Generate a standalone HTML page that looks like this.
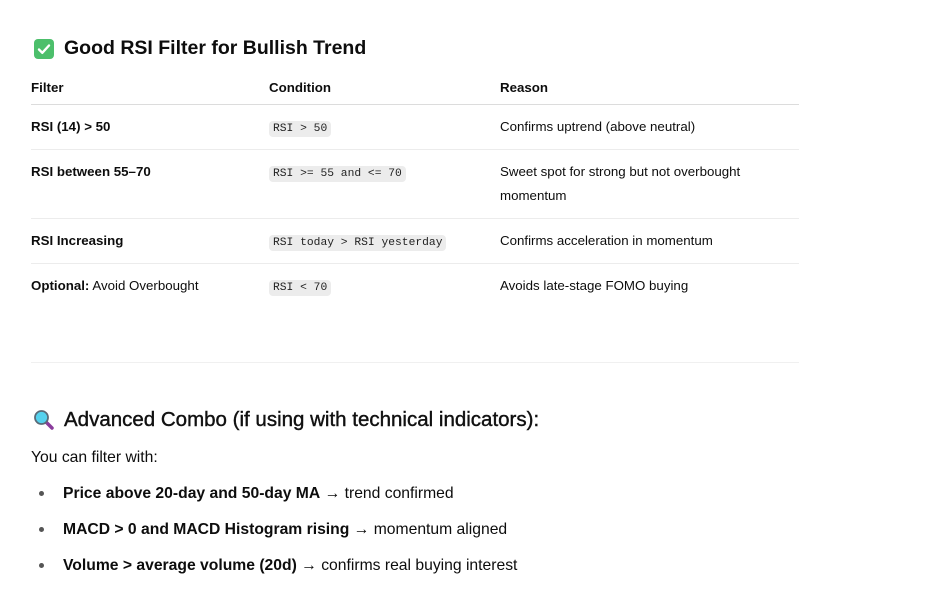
<!DOCTYPE html>
<html><head><meta charset="utf-8"><style>
body{margin:0;width:948px;height:602px;background:#fff;font-family:"Liberation Sans",sans-serif;color:#0d0d0d;position:relative;overflow:hidden}
.a{position:absolute;white-space:nowrap}
h2{margin:0;font-size:19.5px;font-weight:bold;position:absolute;white-space:nowrap}
.t{font-size:13.3px;line-height:24px}
.b{font-weight:bold}
.line{position:absolute;left:31px;width:768px;height:1px;background:#ececec}
code{font-family:"Liberation Mono",monospace;font-size:11.3px;background:#ececec;border-radius:4px;padding:2px 4px;color:#222}
.l{font-size:15.7px;line-height:24px}
.dot{position:absolute;left:39px;width:5px;height:5px;border-radius:50%;background:#555}
</style></head><body>
<div class="a" style="left:34px;top:39px;width:20px;height:20px;border-radius:4px;background:#4cbf6b"><svg width="20" height="20" viewBox="0 0 20 20"><path d="M5 10.5l3.3 3.3L15 6.5" fill="none" stroke="#fff" stroke-width="2.4" stroke-linecap="round" stroke-linejoin="round"/></svg></div>
<h2 style="left:64px;top:37px">Good RSI Filter for Bullish Trend</h2>

<div class="a t b" style="left:31px;top:76px">Filter</div>
<div class="a t b" style="left:269px;top:76px">Condition</div>
<div class="a t b" style="left:500px;top:76px">Reason</div>
<div class="line" style="top:104px;background:#dcdcdc"></div>

<div class="a t b" style="left:31px;top:115px">RSI (14) &gt; 50</div>
<div class="a t" style="left:269px;top:115px"><code>RSI &gt; 50</code></div>
<div class="a t" style="left:500px;top:115px">Confirms uptrend (above neutral)</div>
<div class="line" style="top:149px"></div>

<div class="a t b" style="left:31px;top:160px">RSI between 55–70</div>
<div class="a t" style="left:269px;top:160px"><code>RSI &gt;= 55 and &lt;= 70</code></div>
<div class="a t" style="left:500px;top:160px">Sweet spot for strong but not overbought<br>momentum</div>
<div class="line" style="top:218px"></div>

<div class="a t b" style="left:31px;top:229px">RSI Increasing</div>
<div class="a t" style="left:269px;top:229px"><code>RSI today &gt; RSI yesterday</code></div>
<div class="a t" style="left:500px;top:229px">Confirms acceleration in momentum</div>
<div class="line" style="top:263px"></div>

<div class="a t" style="left:31px;top:274px"><span class="b">Optional:</span> Avoid Overbought</div>
<div class="a t" style="left:269px;top:274px"><code>RSI &lt; 70</code></div>
<div class="a t" style="left:500px;top:274px">Avoids late-stage FOMO buying</div>

<div class="line" style="top:362px;background:#f0f0f0"></div>

<svg class="a" style="left:33px;top:409px" width="22" height="22" viewBox="0 0 22 22"><line x1="12" y1="12" x2="19" y2="19" stroke="#8a3c9c" stroke-width="3.5" stroke-linecap="round"/><circle cx="8.5" cy="8.5" r="6.5" fill="#55d2ee" stroke="#5a6b78" stroke-width="1.8"/></svg>
<h2 style="left:64px;top:408px;font-weight:normal;font-size:20.5px;color:#111;-webkit-text-stroke:0.4px #111">Advanced Combo (if using with technical indicators):</h2>

<div class="a l" style="left:31px;top:446px">You can filter with:</div>
<div class="dot" style="top:491px"></div>
<div class="a l" style="left:63px;top:482px"><span class="b">Price above 20-day and 50-day MA</span> → trend confirmed</div>
<div class="dot" style="top:527px"></div>
<div class="a l" style="left:63px;top:518px"><span class="b">MACD &gt; 0 and MACD Histogram rising</span> → momentum aligned</div>
<div class="dot" style="top:563px"></div>
<div class="a l" style="left:63px;top:554px"><span class="b">Volume &gt; average volume (20d)</span> → confirms real buying interest</div>
</body></html>
